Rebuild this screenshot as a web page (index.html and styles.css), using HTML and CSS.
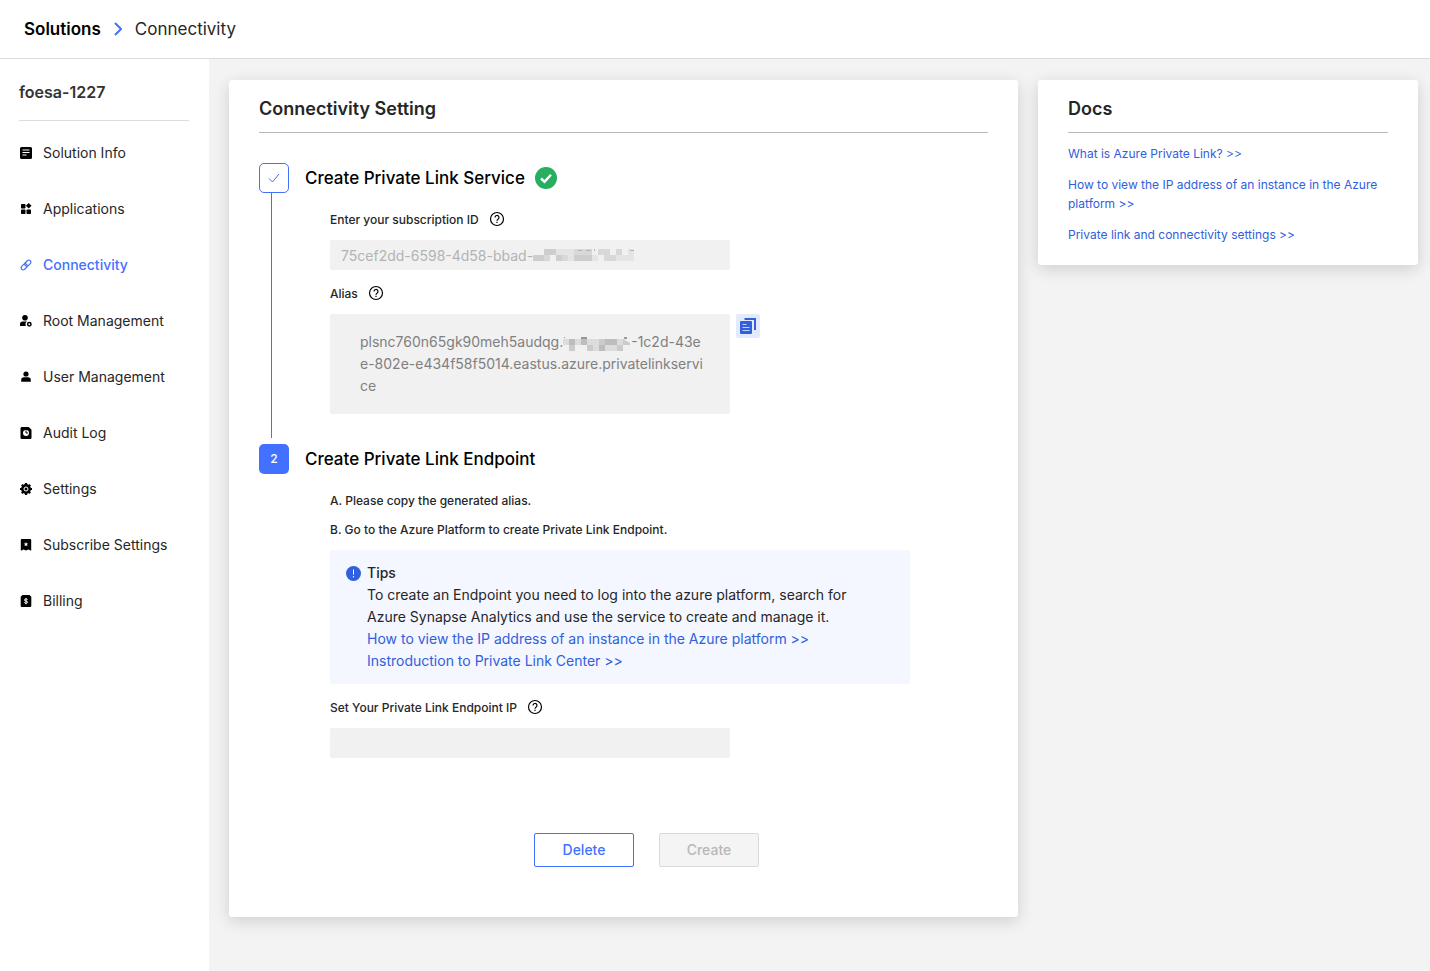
FILE: index.html
```html
<!DOCTYPE html>
<html lang="en">
<head>
  <meta charset="utf-8">
  <meta name="viewport" content="width=device-width, initial-scale=1">
  <title>Connectivity | Solutions</title>
  <link rel="stylesheet" href="styles.css">
</head>
<body>
  <header class="topbar">
    <a class="crumb-root" href="#">Solutions</a>
    <svg class="crumb-arrow" width="8" height="14" viewBox="0 0 8 14"><path d="M1 1l6 6-6 6"/></svg>
    <span>Connectivity</span>
  </header>
  <div class="layout">
    <aside class="sidebar">
      <h2 class="instance">foesa-1227</h2>
      <nav class="menu">
        <a href="#">
          <svg viewBox="0 0 12 12"><path fill-rule="evenodd" d="M1.500 0h9A1.500 1.500 0 0 1 12 1.500v9a1.500 1.500 0 0 1-1.500 1.500h-9A1.500 1.500 0 0 1 0 10.500v-9A1.500 1.500 0 0 1 1.500 0zM2.500 2.500v1h7v-1zM2.500 5v1h7v-1zM2.500 7.500v1h4v-1z"/></svg>
          Solution Info
        </a>
        <a href="#">
          <svg viewBox="0 0 12 12"><rect x="1" y="1" width="4.500" height="4.500" rx=".8"/><rect x="1" y="6.500" width="4.500" height="4.500" rx=".8"/><rect x="6.500" y="6.500" width="4.500" height="4.500" rx=".8"/><path d="M8.700 0l2.800 2.800-2.800 2.800-2.800-2.800z"/></svg>
          Applications
        </a>
        <a class="active" href="#">
          <svg class="outline" viewBox="0 0 12 12"><rect x="-3.500" y="-2.100" width="7" height="4.200" rx="2.100" transform="translate(7.800 4.200) rotate(-45)"/><rect x="-3.500" y="-2.100" width="7" height="4.200" rx="2.100" transform="translate(4.200 7.800) rotate(-45)"/></svg>
          Connectivity
        </a>
        <a href="#">
          <svg viewBox="0 0 12 12"><circle cx="5" cy="2.800" r="2.800"/><path d="M0 11V9.200a2.700 2.700 0 0 1 2.700-2.700H7a3.500 3.500 0 0 0-1 4.500z"/><circle class="ring" cx="9.300" cy="9.300" r="1.700"/></svg>
          Root Management
        </a>
        <a href="#">
          <svg viewBox="0 0 12 12"><circle cx="6" cy="3" r="2.600"/><path d="M1.200 10.800V9a2.800 2.800 0 0 1 2.800-2.800h4A2.800 2.800 0 0 1 10.800 9v1.800z"/></svg>
          User Management
        </a>
        <a href="#">
          <svg viewBox="0 0 12 12"><path d="M1.200 0h7.600L11.500 2.700v8.100a1.200 1.200 0 0 1-1.200 1.200H1.700A1.200 1.200 0 0 1 .5 10.800V1.200z"/><circle class="hole" cx="6" cy="6" r="3"/><path class="hand" d="M6 3.500V6h2"/></svg>
          Audit Log
        </a>
        <a href="#">
          <svg viewBox="0 0 12 12"><circle cx="6" cy="6" r="4.900"/><path class="teeth" d="M6 0v12M0 6h12M1.800 1.800l8.400 8.400M10.200 1.800l-8.400 8.400"/><circle class="gear-ring" cx="6" cy="6" r="2"/></svg>
          Settings
        </a>
        <a href="#">
          <svg viewBox="0 0 12 12"><path d="M1.800 0h8.400a1 1 0 0 1 1 1v10.800L8.500 10.500 6 11.500 3.500 10.500.8 11.800V1a1 1 0 0 1 1-1z"/><path class="hole" d="M6 3l.7 1.400 1.500.2-1.100 1 .3 1.500L6 6.400l-1.400.7.3-1.500-1.100-1 1.500-.2z"/></svg>
          Subscribe Settings
        </a>
        <a href="#">
          <svg viewBox="0 0 12 12"><path d="M2.500 0h7l1.800 1.800v9a1.200 1.200 0 0 1-1.200 1.200H1.900A1.200 1.200 0 0 1 .7 10.800v-9z"/><path class="dollar" d="M7.600 4.700c-.3-.6-.9-.8-1.600-.8-.9 0-1.600.4-1.600 1.100 0 1.500 3.200.6 3.200 2.200 0 .7-.7 1.100-1.600 1.100s-1.500-.3-1.700-1M6 3v6.200"/></svg>
          Billing
        </a>
      </nav>
    </aside>
    <main class="content">
      <section class="card setting">
        <h1 class="card-title">Connectivity Setting</h1>
        <div class="steps">
          <div class="step">
            <div class="rail">
              <span class="badge done"><svg width="12" height="10" viewBox="0 0 12 10"><path d="M1 5.500L4.500 9 11 1"/></svg></span>
              <span class="line"></span>
            </div>
            <div class="step-main">
              <h2 class="step-title">Create Private Link Service
                <svg width="22" height="22" viewBox="0 0 22 22"><circle cx="11" cy="11" r="11" fill="#27ae60"/><path d="M6 11.500l3.500 3.200 6.500-7" fill="none" stroke="#fff" stroke-width="2.400"/></svg>
              </h2>
              <div class="step-body">
                <div class="label-row">
                  <label for="subscription">Enter your subscription ID</label>
                  <svg class="help" viewBox="0 0 16 16"><circle cx="8" cy="8" r="6.500"/><path d="M6 6.500a2 2 0 1 1 3 1.700c-.7.400-1 .8-1 1.500M8 10.700v1.200"/></svg>
                </div>
                <div class="masked">
                  <input type="text" id="subscription" value="75cef2dd-6598-4d58-bbad-" disabled>
                  <svg class="mosaic" width="104" height="12" viewBox="0 0 104 12">
                    <path fill="#cecece" d="M12 0h12v6H12zM1 6h11v6H1zM24 6h6v6h-6zM42 6h18v6H42z"/>
                    <path fill="#d8d8d8" d="M66 0h12v6H66zM84 0h6v6h-6zM72 6h12v6H72zM42 0h18v6H42zM12 6h6v6h-6zM30 6h6v6h-6z"/>
                    <path fill="#e4e4e4" d="M24 0h18v6H24zM36 6h6v6h-6zM60 6h6v6h-6zM84 6h18v6H84zM96 0h6v6h-6z"/>
                    <path fill="#b3b3b3" d="M46 1h4v1h-4zM54 1h5v1h-5zM62 0h1v2h-1zM98 1h4v1h-4z"/>
                  </svg>
                </div>
                <div class="label-row">
                  <label for="alias">Alias</label>
                  <svg class="help" viewBox="0 0 16 16"><circle cx="8" cy="8" r="6.500"/><path d="M6 6.500a2 2 0 1 1 3 1.700c-.7.400-1 .8-1 1.500M8 10.700v1.200"/></svg>
                </div>
                <div class="alias-row">
                  <output class="alias" id="alias">plsnc760n65gk90meh5audqg.<svg width="68" height="15" viewBox="0 0 68 15"><path fill="#bdbdbd" d="M6 3h6v6H6zM18 3h6v6h-6zM42 3h12v6H42zM36 9h6v6h-6z"/><path fill="#cbcbcb" d="M6 9h6v6H6zM24 9h6v6h-6zM36 3h6v6h-6zM54 9h6v6h-6zM60 3l7 4v2h-7z"/><path fill="#dcdcdc" d="M0 3h6v6H0zM12 3h6v6h-6zM24 3h12v6H24zM54 3h6v6h-6zM30 9h6v6h-6zM42 9h12v6H42z"/><path fill="#999" d="M18 1h6v2h-6zM61 1h3v2h-3zM1 1h1v1H1z"/></svg>-1c2d-43ee-802e-e434f58f5014.eastus.azure.privatelinkservice</output>
                  <button class="copy" type="button" aria-label="Copy">
                    <svg width="16" height="16" viewBox="0 0 16 16"><path d="M4.500 1H15v11" fill="none" stroke="#3060dc" stroke-width="2"/><rect x="0" y="3" width="12" height="13" rx="1" fill="#3060dc"/><path d="M2.500 6.500h4M2.500 9.500h7M2.500 12.500h7" stroke="#c5d2fa"/></svg>
                  </button>
                </div>
              </div>
            </div>
          </div>
          <div class="step">
            <div class="rail">
              <span class="badge">2</span>
            </div>
            <div class="step-main">
              <h2 class="step-title">Create Private Link Endpoint</h2>
              <div class="step-body">
                <p class="note">A. Please copy the generated alias.</p>
                <p class="note">B. Go to the Azure Platform to create Private Link Endpoint.</p>
                <div class="tips">
                  <svg width="15" height="15" viewBox="0 0 15 15"><circle cx="7.500" cy="7.500" r="7.500" fill="#3060dc"/><path d="M7.500 3.500v5M7.500 10v1.500" stroke="#fff"/></svg>
                  <div class="tips-text">
                    <strong>Tips</strong>
                    <p>To create an Endpoint you need to log into the azure platform, search for Azure Synapse Analytics and use the service to create and manage it.</p>
                    <a href="#">How to view the IP address of an instance in the Azure platform &gt;&gt;</a>
                    <a href="#">Instroduction to Private Link Center &gt;&gt;</a>
                  </div>
                </div>
                <div class="label-row">
                  <label for="endpoint">Set Your Private Link Endpoint IP</label>
                  <svg class="help" viewBox="0 0 16 16"><circle cx="8" cy="8" r="6.500"/><path d="M6 6.500a2 2 0 1 1 3 1.700c-.7.400-1 .8-1 1.500M8 10.700v1.200"/></svg>
                </div>
                <input type="text" id="endpoint" disabled>
              </div>
              <div class="actions">
                <button class="btn" type="button">Delete</button>
                <button class="btn" type="button" disabled>Create</button>
              </div>
            </div>
          </div>
        </div>
      </section>
      <section class="card docs">
        <h2 class="card-title">Docs</h2>
        <ul class="doc-list">
          <li><a href="#">What is Azure Private Link? &gt;&gt;</a></li>
          <li><a href="#">How to view the IP address of an instance in the Azure platform &gt;&gt;</a></li>
          <li><a href="#">Private link and connectivity settings &gt;&gt;</a></li>
        </ul>
      </section>
    </main>
  </div>
</body>
</html>
```
FILE: styles.css
```css
* {
  box-sizing: border-box;
}
body {
  margin: 0;
  min-height: 100vh;
  display: flex;
  flex-direction: column;
  font-family: Inter, "Liberation Sans", sans-serif;
  font-size: 14px;
  line-height: 22px;
  color: #262626;
  background: #f3f3f3;
}
h1,
h2,
p,
ul {
  margin: 0;
  padding: 0;
}
a {
  color: #3060dc;
  text-decoration: none;
}
svg {
  flex: none;
}
.topbar {
  display: flex;
  align-items: center;
  height: 59px;
  padding: 0 24px;
  border-bottom: 1px solid #dcdcdc;
  background: #fff;
  font-size: 17px;
}
.topbar .crumb-root {
  color: #000;
  font-weight: 600;
}
.crumb-arrow {
  margin: 0 13px;
  fill: none;
  stroke: #4371ff;
  stroke-width: 2;
}
.layout {
  flex: 1;
  display: flex;
}
.sidebar {
  flex: none;
  width: 209px;
  padding: 0 20px 0 19px;
  background: #fff;
}
.instance {
  padding: 22px 0 17px;
  border-bottom: 1px solid #dcdcdc;
  font-size: 16px;
  font-weight: 600;
  color: #333;
}
.menu {
  padding-top: 4px;
}
.menu a {
  display: flex;
  align-items: center;
  gap: 11px;
  height: 56px;
  padding-left: 1px;
  color: #262626;
}
.menu svg {
  width: 12px;
  height: 12px;
  fill: #000;
}
.menu .active {
  color: #4371ff;
  font-weight: 500;
}
.menu .outline {
  fill: none;
  stroke: #4371ff;
  stroke-width: 1.2;
}
.menu .ring {
  fill: #fff;
  stroke: #000;
  stroke-width: 1.5;
}
.menu .hole {
  fill: #fff;
}
.menu .hand {
  fill: none;
  stroke: #000;
}
.menu .teeth {
  stroke: #000;
  stroke-width: 2.2;
}
.menu .gear-ring,
.menu .dollar {
  fill: none;
  stroke: #fff;
}
.content {
  flex: 1;
  display: flex;
  align-items: flex-start;
  gap: 20px;
  min-width: 0;
  padding: 21px 12px 54px 20px;
}
.card {
  padding: 17px 30px 21px;
  border-radius: 3px;
  background: #fff;
  box-shadow: 0 4px 16px rgba(0, 0, 0, 0.15);
}
.setting {
  flex: 1;
  padding-bottom: 50px;
}
.docs {
  flex: none;
  width: 380px;
}
.card-title {
  padding-bottom: 11px;
  border-bottom: 1px solid #b8b8b8;
  font-size: 18px;
  line-height: 24px;
  font-weight: 600;
}
.steps {
  padding-top: 30px;
}
.step {
  display: flex;
  gap: 16px;
}
.rail {
  flex: none;
  display: flex;
  flex-direction: column;
  width: 30px;
}
.badge {
  display: flex;
  align-items: center;
  justify-content: center;
  height: 30px;
  border-radius: 5px;
  background: #4371ff;
  color: #fff;
  font-size: 12px;
  font-weight: 500;
}
.badge.done {
  border: 1px solid #4371ff;
  background: #fff;
}
.badge svg {
  fill: none;
  stroke: #4371ff;
}
.line {
  flex: 1;
  width: 1px;
  margin: 0 0 6px 12px;
  background: #4371ff;
}
.step-main {
  flex: 1;
  min-width: 0;
}
.step-title {
  display: flex;
  align-items: center;
  gap: 10px;
  height: 30px;
  font-size: 17px;
  font-weight: 500;
  color: #000;
}
.step-body {
  padding: 15px 0 0 25px;
}
.step:first-child .step-body {
  padding-bottom: 30px;
}
.label-row {
  display: flex;
  align-items: center;
  gap: 10px;
  margin-bottom: 10px;
}
* + .label-row {
  margin-top: 12px;
}
label,
.note {
  padding-top: 2px;
  font-size: 12px;
  line-height: 20px;
  font-weight: 500;
}
.note {
  margin-bottom: 7px;
}
.help {
  width: 16px;
  height: 16px;
  fill: none;
  stroke: #000;
  stroke-width: 1.2;
}
input {
  display: block;
  width: 400px;
  height: 30px;
  padding: 0 11px;
  border: 0;
  border-radius: 2px;
  background: #f1f1f1;
  color: #b3b3b3;
  font: inherit;
}
.masked {
  position: relative;
  width: 400px;
}
.mosaic {
  position: absolute;
  top: 9px;
  left: 202px;
}
.alias-row {
  display: flex;
  align-items: flex-start;
  gap: 6px;
}
.alias {
  width: 400px;
  padding: 17px 24px 17px 30px;
  border-radius: 2px;
  background: #f1f1f1;
  color: #808080;
  word-break: break-all;
}
.alias svg {
  vertical-align: -4px;
}
.copy {
  display: flex;
  padding: 4px;
  border: 0;
  border-radius: 2px;
  background: #e4eafe;
  cursor: pointer;
}
.tips {
  display: flex;
  align-items: flex-start;
  gap: 6px;
  max-width: 580px;
  margin-top: 10px;
  padding: 12px 16px;
  border-radius: 2px;
  background: #f4f7ff;
}
.tips > svg {
  margin-top: 4px;
}
.tips-text {
  max-width: 490px;
}
.tips-text strong {
  font-weight: 500;
}
.tips-text a {
  display: block;
}
.actions {
  display: flex;
  justify-content: center;
  gap: 25px;
  padding-top: 75px;
}
.btn {
  width: 100px;
  height: 34px;
  border: 1px solid #4371ff;
  border-radius: 2px;
  background: #fff;
  color: #4371ff;
  font: inherit;
  font-weight: 500;
  cursor: pointer;
}
.btn:disabled {
  border-color: #d9d9d9;
  background: #f4f4f4;
  color: #b8b8b8;
  cursor: default;
}
.doc-list {
  display: flex;
  flex-direction: column;
  gap: 12px;
  padding-top: 11px;
  list-style: none;
  font-size: 12px;
  line-height: 19px;
}
```
